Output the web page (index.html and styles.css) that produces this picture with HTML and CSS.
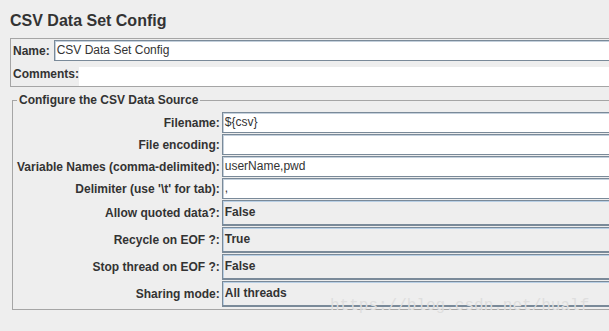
FILE: index.html
```html
<!DOCTYPE html>
<html lang="en">
<head>
    <meta charset="UTF-8">
    <title>CSV Data Set Config</title>
    <link rel="stylesheet" href="styles.css">
</head>
<body>
    <h1 class="title">CSV Data Set Config</h1>

    <div class="panel">
        <div class="name-row">
            <span class="label">Name:</span>
            <div class="field">CSV Data Set Config</div>
        </div>
        <div class="comments-row">
            <span class="label">Comments:</span>
            <div class="comments"></div>
        </div>
    </div>

    <fieldset class="source">
        <legend>Configure the CSV Data Source</legend>
        <div class="form">
            <span class="label">Filename:</span>
            <div class="field">${csv}</div>

            <span class="label">File encoding:</span>
            <div class="field"></div>

            <span class="label">Variable Names (comma-delimited):</span>
            <div class="field">userName,pwd</div>

            <span class="label">Delimiter (use '\t' for tab):</span>
            <div class="field">,</div>

            <span class="label">Allow quoted data?:</span>
            <div class="combo">False</div>

            <span class="label">Recycle on EOF ?:</span>
            <div class="combo">True</div>

            <span class="label">Stop thread on EOF ?:</span>
            <div class="combo">False</div>

            <span class="label">Sharing mode:</span>
            <div class="combo">All threads</div>
        </div>
    </fieldset>

    <div class="watermark">https://blog.csdn.net/hualf</div>
</body>
</html>
```

FILE: styles.css
```css
html, body {
    margin: 0;
    overflow: hidden;
    background-color: #eeeeee;
}
body {
    position: relative;
    height: 331px;
    font-family: Arial, "Liberation Sans", sans-serif;
    font-size: 12px;
    color: #333;
}
.title {
    margin: 0;
    padding: 11px 10px 0;
    font-size: 16px;
    line-height: 20px;
    font-weight: bold;
}
.label {
    font-weight: bold;
    white-space: nowrap;
}
.panel {
    margin: 7px 0 0 10px;
    padding: 1px 0 0 1px;
    border: 1px solid #a5a5a5;
    border-right: 0;
}
.name-row {
    display: flex;
    align-items: center;
    height: 21px;
}
.name-row .label {
    padding-left: 1px;
    margin-right: 4px;
}
.field {
    flex: 1;
    box-sizing: border-box;
    height: 21px;
    padding: 0 2px;
    line-height: 19px;
    background-color: #fff;
    border: 1px solid #7a8a99;
    border-right: 0;
    box-shadow: inset 1px 1px 0 #c4d0dc;
}
.comments-row {
    display: flex;
    height: 19px;
    margin-top: 6px;
}
.comments-row .label {
    padding-left: 1px;
    line-height: 15px;
}
.comments {
    flex: 1;
    background-color: #fff;
}
.source {
    margin: 6px 0 0 12px;
    padding: 5px 0 2px 4px;
    border: 1px solid #a5a5a5;
    border-right: 0;
}
.source legend {
    padding: 0 2px;
    font-weight: bold;
    line-height: 14px;
}
.form {
    display: grid;
    grid-template-columns: max-content 1fr;
    column-gap: 2px;
    row-gap: 1px;
    align-items: center;
}
.form .label {
    text-align: right;
}
.combo {
    box-sizing: border-box;
    height: 26px;
    padding-left: 2px;
    line-height: 23px;
    font-weight: bold;
    background-color: #eeeeee;
    border: 1px solid #7a8a99;
    border-bottom-width: 2px;
    border-right: 0;
    box-shadow: inset 1px 1px 0 #b8cfe5;
}
.watermark {
    position: absolute;
    left: 330px;
    top: 297px;
    font-family: "Liberation Mono", monospace;
    font-size: 16px;
    color: #dedede;
    white-space: nowrap;
}
```
